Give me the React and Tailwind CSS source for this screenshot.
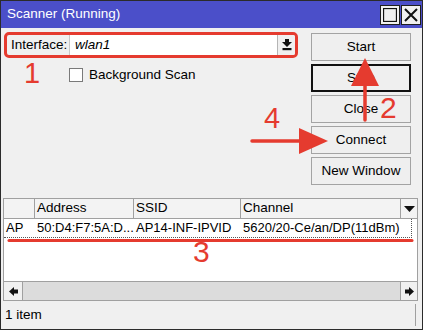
import React from "react";

const RED = "#e53b2f";

function TitleButton({ children }) {
  return (
    <div className="w-[20px] h-[20px] bg-[#f0f0f0] border border-[#1e1e1e] flex items-center justify-center">
      {children}
    </div>
  );
}

function Btn({ label, focused }) {
  return (
    <div
      className={
        "h-[28px] w-[100px] flex items-center justify-center bg-[#efefef] " +
        (focused ? "border-2 border-[#111]" : "border border-[#a3a3a3]")
      }
    >
      {label}
    </div>
  );
}

function Annotations() {
  /* red marks drawn over the dialog */
  return (
    <div className="absolute inset-0 pointer-events-none">
      <svg className="absolute left-0 top-0" width="423" height="330">
        <line x1="364" y1="80" x2="364" y2="119" stroke={RED} strokeWidth="3.5" strokeLinecap="round" />
        <polygon points="364,57 350,85 378,85" fill={RED} />
        <line x1="251" y1="140" x2="302" y2="140" stroke={RED} strokeWidth="3.5" strokeLinecap="round" />
        <polygon points="298,127 327,140 298,153" fill={RED} />
        <line x1="8" y1="239.5" x2="411" y2="239.5" stroke={RED} strokeWidth="3" strokeLinecap="round" />
      </svg>
      <span className="absolute left-[23px] top-[58px] text-[29px] leading-none text-[#e53b2f]">1</span>
      <span className="absolute left-[379px] top-[92px] text-[30px] leading-none text-[#e53b2f]">2</span>
      <span className="absolute left-[192px] top-[236px] text-[30px] leading-none text-[#e53b2f]">3</span>
      <span className="absolute left-[263px] top-[103px] text-[29px] leading-none text-[#e53b2f]">4</span>
    </div>
  );
}

export default function App() {
  const cols = [
    { w: "w-[31px]", head: "", cell: "AP" },
    { w: "w-[99px]", head: "Address", cell: "50:D4:F7:5A:D..." },
    { w: "w-[107px]", head: "SSID", cell: "AP14-INF-IPVID" },
    { w: "w-[160px]", head: "Channel", cell: "5620/20-Ce/an/DP(11dBm)" },
  ];

  return (
    <div className="relative w-[423px] h-[330px] flex flex-col bg-[#f0f0f0] border border-[#2b2b2b] font-['Liberation_Sans',Arial,sans-serif] text-[13.5px] text-black overflow-hidden">
      {/* title bar */}
      <div className="h-[27px] shrink-0 bg-[#4b4fc9] flex items-center justify-between pl-[6px] pr-px">
        <span className="text-white text-[13.5px]">Scanner (Running)</span>
        <div className="flex gap-px">
          <TitleButton>
            <svg width="14" height="14" viewBox="0 0 14 14">
              <rect x="0.5" y="0.5" width="13" height="13" fill="none" stroke="#111" strokeWidth="1.3" />
            </svg>
          </TitleButton>
          <TitleButton>
            <svg width="14" height="14" viewBox="0 0 14 14">
              <path d="M1 1 L13 13 M13 1 L1 13" stroke="#111" strokeWidth="2" />
            </svg>
          </TitleButton>
        </div>
      </div>

      {/* top part: interface + buttons */}
      <div className="h-[170px] shrink-0 flex pl-[3px]">
        <div className="w-[294px] pt-[4px] flex flex-col">
          <div className="h-[26px] flex items-stretch border-[3px] border-[#e53b2f] rounded-[5px] overflow-hidden">
            <div className="w-[62px] pl-[4px] flex items-center">Interface:</div>
            <div className="flex-1 bg-white border-l border-[#c8c8c8] pl-[5px] flex items-center italic">wlan1</div>
            <div className="w-[18px] bg-[#f0f0f0] border-l border-[#b5b5b5] flex items-center justify-center">
              <svg width="10" height="12" viewBox="0 0 10 12">
                <rect x="3" y="0" width="4" height="3" fill="#111" />
                <polygon points="0,3 10,3 5,8" fill="#111" />
                <rect x="0.5" y="9" width="9" height="2.2" fill="#111" />
              </svg>
            </div>
          </div>
          <div className="mt-[7px] flex items-center pl-[65px]">
            <div className="w-[14px] h-[14px] bg-white border border-[#7a7a7a]" />
            <span className="ml-[6px]">Background Scan</span>
          </div>
        </div>
        <div className="ml-[13px] pt-[5px] flex flex-col gap-[3px]">
          <Btn label="Start" />
          <Btn label="Stop" focused />
          <Btn label="Close" />
          <Btn label="Connect" />
          <Btn label="New Window" />
        </div>
      </div>

      {/* table */}
      <div className="ml-[2px] w-[415px] h-[103px] shrink-0 flex flex-col border border-[#a0a0a0] bg-white">
        <div className="h-[20px] flex bg-[#f3f3f3] border-b border-[#a0a0a0]">
          {cols.map((c, i) => (
            <div key={i} className={c.w + " border-r border-[#a0a0a0] pl-[2px] flex items-center"}>
              {c.head}
            </div>
          ))}
          <div className="flex-1 flex items-center justify-center">
            <svg width="11" height="6" viewBox="0 0 11 6">
              <polygon points="0,0 11,0 5.5,6" fill="#111" />
            </svg>
          </div>
        </div>
        <div className="h-[19px] w-[408px] flex text-[13px] border-b border-r border-dotted border-[#555]">
          {cols.map((c, i) => (
            <div key={i} className={c.w + " pl-[2px] flex items-center whitespace-nowrap overflow-hidden"}>
              {c.cell}
            </div>
          ))}
        </div>
        <div className="flex-1" />
        <div className="h-[19px] flex border-t border-[#a0a0a0] bg-[#f0f0f0]">
          <div className="w-[19px] flex items-center justify-center border-r border-[#a0a0a0]">
            <svg width="9" height="9" viewBox="0 0 9 9">
              <polygon points="0,4.5 5,0 5,9" fill="#111" />
              <rect x="5" y="2.5" width="4" height="4" fill="#111" />
            </svg>
          </div>
          <div className="flex-1 bg-[#dcdcdc]" />
          <div className="w-[17px] flex items-center justify-center border-l border-[#a0a0a0]">
            <svg width="9" height="9" viewBox="0 0 9 9">
              <polygon points="9,4.5 4,0 4,9" fill="#111" />
              <rect x="0" y="2.5" width="4" height="4" fill="#111" />
            </svg>
          </div>
        </div>
      </div>

      {/* status bar */}
      <div className="flex-1 flex items-center">
        <div className="flex-1 pl-[4px]">1 item</div>
        <div className="w-px h-[22px] bg-[#a0a0a0] mr-[6px]" />
      </div>

      <Annotations />
    </div>
  );
}
